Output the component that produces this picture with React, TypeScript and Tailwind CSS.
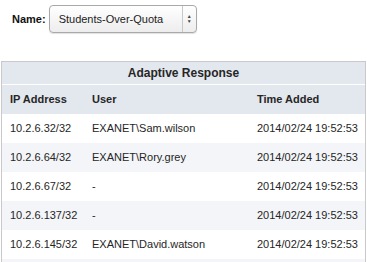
const rows = [
  { ip: '10.2.6.32/32', user: 'EXANET\\Sam.wilson', time: '2014/02/24 19:52:53' },
  { ip: '10.2.6.64/32', user: 'EXANET\\Rory.grey', time: '2014/02/24 19:52:53' },
  { ip: '10.2.6.67/32', user: '-', time: '2014/02/24 19:52:53' },
  { ip: '10.2.6.137/32', user: '-', time: '2014/02/24 19:52:53' },
  { ip: '10.2.6.145/32', user: 'EXANET\\David.watson', time: '2014/02/24 19:52:53' },
]

export default function App() {
  return (
    <div className="w-[367px] h-[262px] overflow-hidden bg-white text-[#262626] font-['Liberation_Sans',sans-serif]">
      {/* 名前セレクタ */}
      <div className="flex items-center gap-[3px] pl-[12px] pt-[5px]">
        <span className="text-[11px] font-bold text-[#111]">Name:</span>
        <div className="flex h-[28px] w-[148px] items-stretch rounded-[4px] border border-[#a9a9a9] bg-gradient-to-b from-white to-[#ededed] shadow-[0_1px_1px_rgba(0,0,0,0.12)]">
          <span className="flex-1 flex items-center pl-[9px] text-[11px] text-[#222]">
            Students-Over-Quota
          </span>
          <span className="w-[14px] flex items-center justify-center border-l border-[#c8c8c8]">
            <span className="flex flex-col items-center leading-[5px] text-[5px] text-[#444]">
              <span>▲</span>
              <span>▼</span>
            </span>
          </span>
        </div>
      </div>

      {/* テーブル */}
      <div className="mt-[28px] ml-[1px] w-[365px] border border-[#c9c9c9] text-[11px]">
        <div className="h-[23px] flex items-center justify-center bg-[#e3e7ee] border-b border-white text-[12px] font-bold">
          Adaptive Response
        </div>
        <div className="h-[29px] flex items-center bg-[#e3e7ee] font-bold">
          <div className="w-[90px] pl-[8px]">IP Address</div>
          <div className="w-[165px]">User</div>
          <div className="flex-1">Time Added</div>
        </div>
        {rows.map((r, i) => (
          <div
            key={r.ip}
            className={`h-[29px] flex items-center ${i % 2 === 1 ? 'bg-[#f3f5f8]' : 'bg-white'}`}
          >
            <div className="w-[90px] pl-[8px]">{r.ip}</div>
            <div className="w-[165px]">{r.user}</div>
            <div className="flex-1">{r.time}</div>
          </div>
        ))}
        {/* 次の行（画面外） */}
        <div className="h-[29px] bg-[#f3f5f8]" />
      </div>
    </div>
  )
}
